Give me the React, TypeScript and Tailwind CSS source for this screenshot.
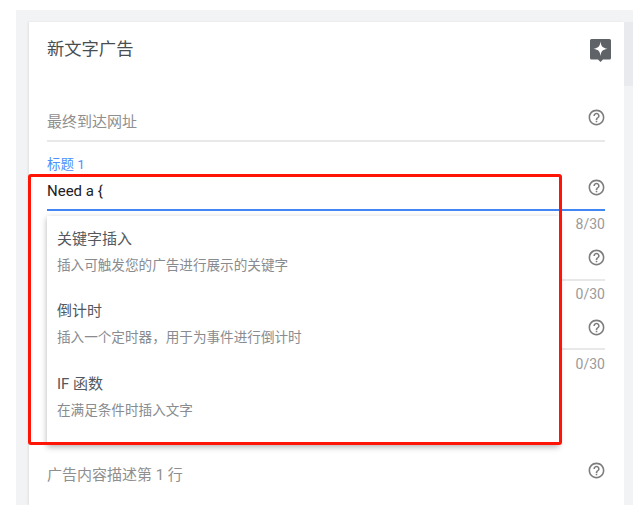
const HELP = "M11 18h2v-2h-2v2zm1-16C6.48 2 2 6.48 2 12s4.48 10 10 10 10-4.48 10-10S17.52 2 12 2zm0 18c-4.41 0-8-3.59-8-8s3.59-8 8-8 8 3.59 8 8-3.59 8-8 8zm0-14c-2.21 0-4 1.79-4 4h2c0-1.1.9-2 2-2s2 .9 2 2c0 2-3 1.75-3 5h2c0-2.25 3-2.5 3-5 0-2.21-1.79-4-4-4z";

function Help({ cls }: { cls: string }) {
  return (
    <svg width="19" height="19" viewBox="0 0 24 24" className={`shrink-0 self-start -mr-[0.5px] ${cls}`} fill="#7d7d7d">
      <path d={HELP} />
    </svg>
  );
}

function Spark() {
  return (
    <svg width="23" height="25" viewBox="0 0 23 25" className="shrink-0">
      <path d="M2.5 1h18a1.5 1.5 0 0 1 1.5 1.5V20a1.5 1.5 0 0 1-1.5 1.5h-6.5L11.5 24 9 21.5H2.5A1.5 1.5 0 0 1 1 20V2.500A1.500 1.500 0 0 1 2.500 1z" fill="#5f6368" />
      <path d="M11.500 3.500C12.200 8 13 9.800 18.500 10.800 13 11.800 12.200 13.600 11.500 18 10.800 13.600 10 11.800 4.500 10.800 10 9.800 10.800 8 11.500 3.500z" fill="#fff" />
    </svg>
  );
}

function Count({ v, cls }: { v: string; cls: string }) {
  return <div className={`text-right text-[14px] leading-[18px] text-[#9a9a9a] ${cls}`}>{v}</div>;
}

function Row({ label, cls, iconCls }: { label?: string; cls: string; iconCls: string }) {
  return (
    <div className={`flex items-center justify-between border-b-2 border-[#e8e8e8] ${cls}`}>
      <span className="text-[15px] text-[#8f8f8f]">{label}</span>
      <Help cls={iconCls} />
    </div>
  );
}

const items = [
  ["关键字插入", "插入可触发您的广告进行展示的关键字"],
  ["倒计时", "插入一个定时器，用于为事件进行倒计时"],
  ["IF 函数", "在满足条件时插入文字"],
];

export default function App() {
  return (
    <div className="relative h-[505px] w-[640px] overflow-hidden bg-white font-['Roboto','Noto_Sans_CJK_SC',sans-serif]">
      <div className="ml-4 mt-[10px] flex h-[495px] w-[617px] bg-[#f1f3f4] pl-[13px] pt-3">
        <div className="h-full w-[595px] bg-white pl-[18px] pr-[19px] shadow-[-1px_0_2px_rgba(0,0,0,0.08)]">
          <div className="flex h-[43px] items-start justify-between pt-4">
            <span className="text-[17.300px] leading-[23px] text-[#4a4d50]">新文字广告</span>
            <div className="-mr-[7px]"><Spark /></div>
          </div>
          <Row label="最终到达网址" cls="mt-[38px] h-[39px] pt-[1px]" iconCls="mt-[4px]" />
          <div className="mt-[13px] text-[13.500px] leading-[18px] text-[#4d90fe]">标题 1</div>
          <div className="flex h-[38px] items-center justify-between border-b-2 border-[#4285f4]">
            <span className="text-[15px] text-[#202124]">Need a {"{"}</span>
            <Help cls="mt-[5px]" />
          </div>
          <Count v="8/30" cls="mt-[4px]" />
          <Row cls="mt-[8px] h-[40px]" iconCls="mt-[7px]" />
          <Count v="0/30" cls="mt-[4px]" />
          <Row cls="mt-[7px] h-[40px]" iconCls="mt-[8px]" />
          <Count v="0/30" cls="mt-[5px]" />
          <div className="mt-[90px] flex h-[24px] items-center justify-between">
            <span className="text-[15px] text-[#8f8f8f]">广告内容描述第 1 行</span>
            <Help cls="-mt-[2px]" />
          </div>
        </div>
        <div className="h-full w-[9px] bg-[#f1f3f4]">
          <div className="h-[64px] bg-[#e8eaed]" />
        </div>
      </div>

      <div className="absolute left-[47px] top-[216px] flex h-[229px] w-[512px] flex-col bg-white pl-[10px] pt-[11.500px] shadow-[0_2px_6px_rgba(0,0,0,0.3)]">
        {items.map(([t, d]) => (
          <div key={t} className="h-[73px]">
            <div className="text-[15px] leading-[22px] text-[#54585c]">{t}</div>
            <div className="mt-[6px] text-[13.600px] leading-[18px] text-[#888c90]">{d}</div>
          </div>
        ))}
      </div>

      <div className="absolute left-[28px] top-[174px] h-[271px] w-[534px] rounded-[3px] border-[3px] border-[#fe1505]" />
    </div>
  );
}
